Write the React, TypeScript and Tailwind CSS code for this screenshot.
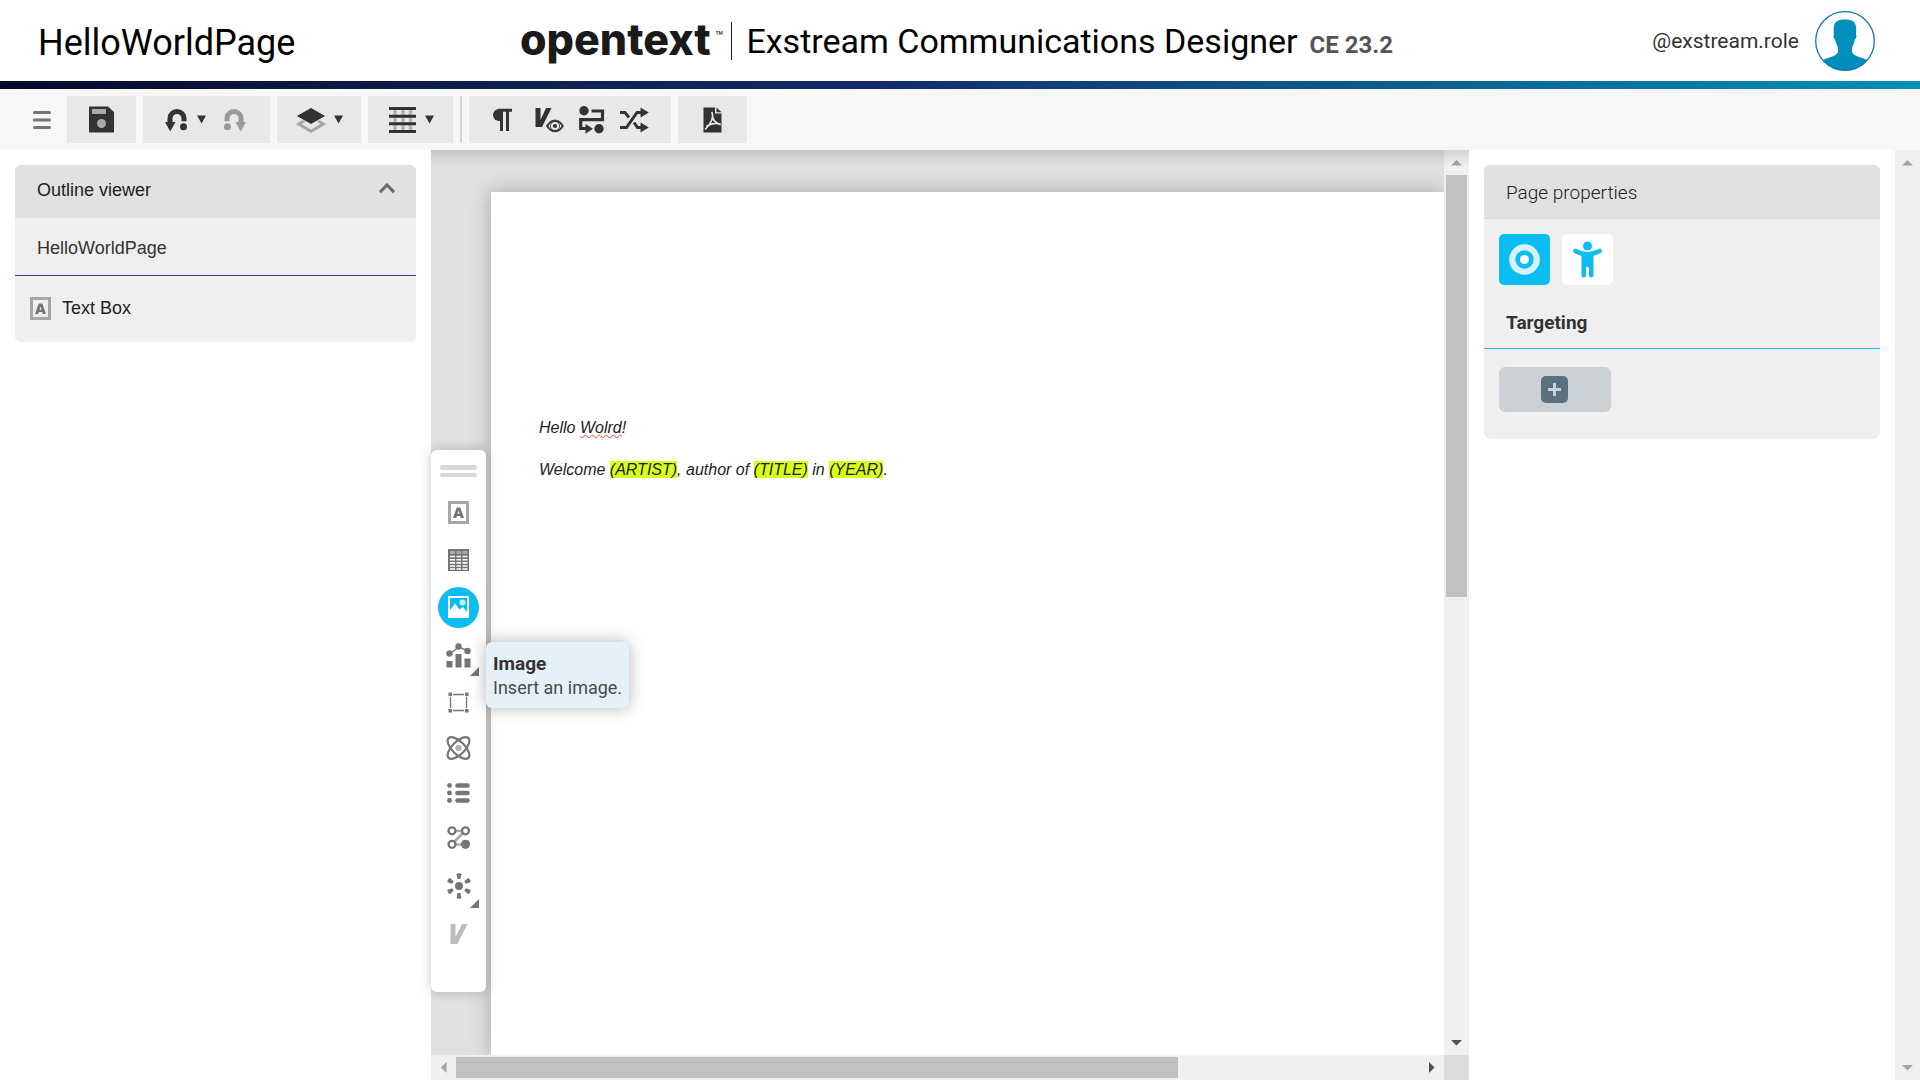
import React from "react";

type IconProps = {
  w: number;
  h: number;
  className?: string;
  children: React.ReactNode;
};

function Icon({ w, h, className = "", children }: IconProps) {
  return (
    <svg
      width={w}
      height={h}
      viewBox={`0 0 ${w} ${h}`}
      fill="none"
      aria-hidden="true"
      className={`shrink-0 ${className}`}
    >
      {children}
    </svg>
  );
}

const DARK = "#333333";
const GRAY = "#757575";

function Caret() {
  return (
    <Icon w={9} h={9}>
      <path d="M0 0.500H9L4.500 8.500Z" fill={DARK} />
    </Icon>
  );
}

function SaveIcon() {
  return (
    <Icon w={25} h={27}>
      <path d="M0 0.500H19L25 6V26.500H0Z" fill={DARK} />
      <rect x="3" y="3" width="14" height="5" fill="#aaa" />
      <circle cx="12.500" cy="17.500" r="4.500" fill="#aaa" />
    </Icon>
  );
}

function UndoIcon({ color = DARK, flip = false }: { color?: string; flip?: boolean }) {
  return (
    <Icon w={24} h={24} className={flip ? "-scale-x-100" : ""}>
      <path d="M6 15V10.500A7 7 0 0 1 20 10.500V13.300" stroke={color} strokeWidth="5" />
      <path d="M1 14H11.500L6.200 23.500Z" fill={color} />
      <circle cx="19.500" cy="18.700" r="3.500" fill={color} />
    </Icon>
  );
}

function LayersIcon() {
  return (
    <Icon w={30} h={26}>
      <path d="M15 9.500L27.300 17L15 24.200L2.700 17Z" stroke="#a6a6a6" strokeWidth="3" />
      <path d="M15 0.500L30 9L15 17.500L0 9Z" fill={DARK} stroke="#e8e8e8" strokeWidth="1" />
    </Icon>
  );
}

function GridIcon() {
  return (
    <Icon w={27} h={26}>
      <path d="M6 2V25M14 2V25M21.500 2V25" stroke="#b5b5b5" strokeWidth="3.500" />
      <path d="M0 1.500H27M0 9.200H27M0 16.800H27M0 24.500H27" stroke={DARK} strokeWidth="3" />
    </Icon>
  );
}

function PilcrowIcon() {
  return (
    <Icon w={20} h={24}>
      <path d="M7 1A6 6 0 0 0 7 13H8V1Z" fill={DARK} />
      <path d="M6 2.300H20M9.500 1V23M15.500 1V23" stroke={DARK} strokeWidth="3" />
    </Icon>
  );
}

function VariableEyeIcon() {
  return (
    <Icon w={29} h={26}>
      <path d="M0.500 1H5.500V13L11 1H16.500L7 20H0.500Z" fill={DARK} />
      <path
        d="M11.500 19C14 14.300 17 13.200 20 13.200S26 14.300 28.300 19C26 23.500 23 24.700 20 24.700S14 23.500 11.500 19Z"
        fill={DARK}
        stroke={DARK}
        strokeWidth="1"
      />
      <path d="M13.500 19C14.500 17 15.500 16 16.500 15.500A5 5 0 0 0 16.500 22.500C15.500 22 14.500 21 13.500 19ZM26.500 19C25.500 17 24.500 16 23.500 15.500A5 5 0 0 1 23.500 22.500C24.500 22 25.500 21 26.500 19Z" fill="#e8e8e8" />
      <circle cx="20" cy="19" r="3.100" stroke="#e8e8e8" strokeWidth="2" />
    </Icon>
  );
}

function FlowIcon() {
  return (
    <Icon w={26} h={28}>
      <circle cx="5" cy="4.800" r="4.700" fill={DARK} />
      <circle cx="20" cy="22.700" r="4.700" fill={DARK} />
      <path d="M12.500 5H23.500V13.700H1.700V22.500H8" stroke={DARK} strokeWidth="3.200" />
      <path d="M6.500 18L14 22.700L6.500 27.700Z" fill={DARK} />
    </Icon>
  );
}

function ShuffleIcon() {
  return (
    <Icon w={29} h={26}>
      <path
        d="M0 5.500H5L9 10.500M0 20.500H6.500L17 5.500H22M14 15.500L17.500 20.500H22"
        stroke={DARK}
        strokeWidth="3"
      />
      <path d="M20.500 0.500L28.800 5.500L20.500 10.500ZM20.500 15.500L28.800 20.500L20.500 25.500Z" fill={DARK} />
    </Icon>
  );
}

function PdfIcon() {
  return (
    <Icon w={19} h={26}>
      <path d="M0.500 0.500H12V6.500H18.500V25.500H0.500Z" fill={DARK} />
      <path d="M13.500 0.500L18.500 5.200H13.500Z" fill={DARK} />
      <path
        d="M9 5.500C10.500 9 9.500 15 2.500 22M9.500 10C10.500 13.500 13 16 17 17.500M4 19C8 16.500 12 15.500 17 17"
        stroke="#e8e8e8"
        strokeWidth="1.700"
        strokeLinecap="round"
      />
    </Icon>
  );
}

function TextBoxIcon() {
  return (
    <Icon w={21} h={23}>
      <rect x="1.500" y="1.500" width="18" height="20" stroke="#a6a6a6" strokeWidth="3" />
      <path
        d="M5 17L8.700 6.500H12.300L16 17H12.700L12.100 15H8.900L8.300 17ZM9.500 12.800H11.500L10.500 9.600Z"
        fill={GRAY}
        fillRule="evenodd"
      />
    </Icon>
  );
}

function TableIcon() {
  return (
    <Icon w={21} h={22}>
      <rect x="0" y="0" width="21" height="22" fill={GRAY} />
      <path d="M2 3.500H7M8.500 3.500H13M14.500 3.500H19.500" stroke="#aaa" strokeWidth="3" />
      <path
        d="M2 7.500H7M8.500 7.500H13M14.500 7.500H19.500M2 10.700H7M8.500 10.700H13M14.500 10.700H19.500M2 13.900H7M8.500 13.900H13M14.500 13.900H19.500M2 17H7M8.500 17H13M14.500 17H19.500M2 20H7M8.500 20H13M14.500 20H19.500"
        stroke="#fff"
        strokeWidth="1.600"
      />
    </Icon>
  );
}

function ImageIcon() {
  return (
    <Icon w={21} h={22}>
      <rect x="1" y="1" width="19" height="20" stroke="#fff" strokeWidth="2" />
      <circle cx="14.500" cy="6.500" r="3" fill="#c5edfb" />
      <path d="M1.500 15L7 7.500L11.500 13.500L15 11L19.500 16.500V21H1.500Z" fill="#fff" />
    </Icon>
  );
}

function ChartIcon() {
  return (
    <Icon w={26} h={25}>
      <path d="M4 10.500L13 4L22 8" stroke={GRAY} strokeWidth="1.500" />
      <circle cx="3.500" cy="10.500" r="3.200" fill={GRAY} />
      <circle cx="12.500" cy="3.500" r="3.200" fill={GRAY} />
      <circle cx="21.500" cy="8" r="3.200" fill={GRAY} />
      <path d="M0.500 18H6.500V24.500H0.500ZM9.500 11H15.500V24.500H9.500ZM18.500 15.500H24.500V24.500H18.500Z" fill={GRAY} />
    </Icon>
  );
}

function FrameIcon() {
  return (
    <Icon w={21} h={21}>
      <path d="M5 2.500H16M5 18.500H16M2.500 5V16M18.500 5V16" stroke={GRAY} strokeWidth="1.300" />
      <path d="M0.500 0.500H4V4H0.500ZM17 0.500H20.500V4H17ZM0.500 17H4V20.500H0.500ZM17 17H20.500V20.500H17Z" fill={GRAY} />
    </Icon>
  );
}

function AtomIcon() {
  return (
    <Icon w={25} h={24}>
      <g stroke={GRAY} strokeWidth="2.200">
        <ellipse cx="12.500" cy="12" rx="14" ry="6.300" transform="rotate(45 12.500 12)" />
        <ellipse cx="12.500" cy="12" rx="14" ry="6.300" transform="rotate(-45 12.500 12)" />
      </g>
      <circle cx="12.500" cy="12" r="3.200" fill="#b5b5b5" />
    </Icon>
  );
}

function ListIcon() {
  return (
    <Icon w={24} h={20}>
      <g fill={GRAY}>
        <circle cx="2.500" cy="2.500" r="2.400" />
        <circle cx="2.500" cy="10" r="2.400" />
        <circle cx="2.500" cy="17.500" r="2.400" />
      </g>
      <path d="M10.500 2.500H20.500M10.500 10H20.500M10.500 17.500H20.500" stroke={GRAY} strokeWidth="4.600" strokeLinecap="round" />
    </Icon>
  );
}

function NodesIcon() {
  return (
    <Icon w={24} h={23}>
      <path d="M5 5H18M5 18.500H18M5 18L18 5" stroke="#aaa" strokeWidth="2.700" />
      <g fill="#fff" stroke={GRAY} strokeWidth="2.300">
        <circle cx="5" cy="4.800" r="3.500" />
        <circle cx="18.500" cy="4.800" r="3.500" />
        <circle cx="5" cy="18.300" r="3.500" />
      </g>
      <circle cx="18.500" cy="18.300" r="4.600" fill={GRAY} />
    </Icon>
  );
}

function BurstIcon() {
  return (
    <Icon w={26} h={26}>
      <circle cx="13" cy="13" r="4" fill={GRAY} />
      {[0, 60, 120, 180, 240, 300].map((a) => (
        <path
          key={a}
          d="M10.600 1.200Q10.600 0.300 13 0.300T15.400 1.200L14.500 6H11.500Z"
          fill={GRAY}
          transform={`rotate(${a} 13 13)`}
        />
      ))}
    </Icon>
  );
}

function VariableIcon() {
  return (
    <Icon w={18} h={20}>
      <path d="M0.500 0H5.500V13L12 0H17.500L7.500 20H0.500Z" fill="#bdbdbd" />
    </Icon>
  );
}

function Corner() {
  return (
    <svg
      width="9"
      height="9"
      viewBox="0 0 9 9"
      aria-hidden="true"
      className="absolute right-[7px] bottom-[3px]"
    >
      <path d="M9 0V9H0Z" fill={GRAY} />
    </svg>
  );
}

function Group({ className, children }: { className: string; children: React.ReactNode }) {
  return <div className={`flex h-[47px] items-center bg-[#e8e8e8] ${className}`}>{children}</div>;
}

function Tool({
  label,
  className = "",
  children,
}: {
  label: string;
  className?: string;
  children: React.ReactNode;
}) {
  return (
    <button type="button" aria-label={label} className={`flex items-center ${className}`}>
      {children}
    </button>
  );
}

function PaletteButton({
  label,
  className,
  menu = false,
  children,
}: {
  label: string;
  className: string;
  menu?: boolean;
  children: React.ReactNode;
}) {
  return (
    <button
      type="button"
      aria-label={label}
      className={`relative flex w-full items-center justify-center ${className}`}
    >
      {children}
      {menu && <Corner />}
    </button>
  );
}

function Arrow({ dir, active }: { dir: "up" | "down" | "left" | "right"; active?: boolean }) {
  const paths = {
    up: "M0 8.500L5.500 3L11 8.500Z",
    down: "M0 3L5.500 8.500L11 3Z",
    left: "M8.500 0L3 5.500L8.500 11Z",
    right: "M3 0L8.500 5.500L3 11Z",
  };
  return (
    <span className="flex size-[25px] shrink-0 items-center justify-center">
      <Icon w={11} h={11}>
        <path d={paths[dir]} fill={active ? "#505050" : "#a3a3a3"} />
      </Icon>
    </span>
  );
}

function Field({ children }: { children: React.ReactNode }) {
  return <span className="bg-[#d7ff19]">{children}</span>;
}

function Header() {
  return (
    <header className="shrink-0">
      <div className="grid h-[81px] grid-cols-[1fr_auto_1fr] items-center pr-[45px] pl-[38px]">
        <h1 className="pt-1 text-[36px] leading-[44px] text-black">HelloWorldPage</h1>
        <div className="flex items-center">
          <span className="flex items-start pb-1 text-[#1a1a1a]">
            <span className="font-[Inter] text-[43px] leading-[40px] font-extrabold">opentext</span>
            <span className="pl-1 text-[14px] leading-[34px]">™</span>
          </span>
          <span className="ml-2 h-[38px] w-px bg-[#1a1a1a]" />
          <span className="ml-[14px] text-[34px] leading-[40px] text-black">
            Exstream Communications Designer
          </span>
          <span className="ml-3 pt-2 text-[24px] leading-8 font-bold text-[#555]">CE 23.2</span>
        </div>
        <div className="flex items-center justify-end gap-4">
          <span className="pt-0.5 text-[21px] text-[#333]">@exstream.role</span>
          <button type="button" aria-label="User profile">
            <Icon w={60} h={60}>
              <defs>
                <clipPath id="avatar">
                  <circle cx="30" cy="30" r="29.500" />
                </clipPath>
              </defs>
              <path
                clipPath="url(#avatar)"
                d="M0 60V52L8 49C14 46 22 45 23 41C23.500 38 22.500 35 21 32L20 28C18.500 28 18 24 19 24C18 14 19 8.500 30 8.500S42 14 41 24C42 24 41.500 28 40 28L39 32C37.500 35 36.500 38 37 41C38 45 46 46 52 49L60 52V60Z"
                fill="#008fbc"
              />
              <circle cx="30" cy="30" r="29.300" stroke="#0d79b0" strokeWidth="1.300" />
            </Icon>
          </button>
        </div>
      </div>
      <div className="h-2 bg-[linear-gradient(to_right,#080a2b_0%,#0f1f4e_26%,#122868_45%,#11407b_55%,#0b6394_76%,#0690b8_100%)]" />
    </header>
  );
}

function Toolbar() {
  return (
    <div className="flex h-[61px] shrink-0 items-center gap-[7px] bg-[#f7f7f7]">
      <button type="button" aria-label="Menu" className="flex h-[47px] w-[60px] items-center pl-[33px]">
        <Icon w={18} h={18}>
          <path d="M1.500 1.500H16.500M1.500 9H16.500M1.500 16.500H16.500" stroke={GRAY} strokeWidth="3" strokeLinecap="round" />
        </Icon>
      </button>
      <Group className="w-[69px] justify-center">
        <Tool label="Save">
          <SaveIcon />
        </Tool>
      </Group>
      <Group className="w-[127px] gap-[17px] pl-[21px]">
        <Tool label="Undo" className="gap-[9px]">
          <UndoIcon />
          <Caret />
        </Tool>
        <Tool label="Redo">
          <UndoIcon color="#999999" flip />
        </Tool>
      </Group>
      <Group className="w-[84px] pl-[19px]">
        <Tool label="Layers" className="gap-2">
          <LayersIcon />
          <Caret />
        </Tool>
      </Group>
      <Group className="w-[85px] pl-[21px]">
        <Tool label="Grid" className="gap-[9px]">
          <GridIcon />
          <Caret />
        </Tool>
      </Group>
      <span className="h-[47px] w-0.5 bg-[#d4d4d4]" />
      <Group className="w-[202px] gap-[15px] pl-[23px]">
        <Tool label="Show formatting" className="mr-2">
          <PilcrowIcon />
        </Tool>
        <Tool label="View variables">
          <VariableEyeIcon />
        </Tool>
        <Tool label="Flow">
          <FlowIcon />
        </Tool>
        <Tool label="Shuffle">
          <ShuffleIcon />
        </Tool>
      </Group>
      <Group className="w-[69px] justify-center">
        <Tool label="Preview PDF">
          <PdfIcon />
        </Tool>
      </Group>
    </div>
  );
}

function OutlinePanel() {
  return (
    <aside className="w-[431px] shrink-0 p-[15px] font-['Liberation_Sans',sans-serif] text-[18px] text-[#222]">
      <section className="overflow-hidden rounded-md bg-[#efefef]">
        <button type="button" className="flex h-[53px] w-full items-center justify-between bg-[#e1e1e1] pr-[21px] pb-0.5 pl-[22px]">
          Outline viewer
          <Icon w={16} h={16}>
            <path d="M1 9.200L8 2L15 9.200" stroke="#6b6b6b" strokeWidth="3" />
          </Icon>
        </button>
        <div className="flex h-[58px] items-center border-b border-[#2e3d98] px-[22px] pt-1 text-[#333]">
          HelloWorldPage
        </div>
        <div className="flex h-[66px] items-center gap-[11px] px-[15px] pb-0.5">
          <TextBoxIcon />
          Text Box
        </div>
      </section>
    </aside>
  );
}

function Palette() {
  return (
    <div
      role="toolbar"
      aria-label="Insert"
      className="absolute top-[300px] left-0 z-20 h-[542px] w-[55px] rounded-md bg-white pt-[15px] shadow-[0_0_12px_rgba(0,0,0,0.22)]"
    >
      <div className="mb-3 flex flex-col items-center gap-[3px]">
        <span className="h-[5px] w-[37px] rounded-full bg-[#d8d8d8]" />
        <span className="h-1 w-[37px] rounded-full bg-[#d8d8d8]" />
      </div>
      <PaletteButton label="Text box" className="h-[47px]">
        <TextBoxIcon />
      </PaletteButton>
      <PaletteButton label="Table" className="h-[47px]">
        <TableIcon />
      </PaletteButton>
      <PaletteButton label="Image" className="h-12">
        <span className="flex size-[41px] items-center justify-center rounded-full bg-[#0bbdf0]">
          <ImageIcon />
        </span>
      </PaletteButton>
      <PaletteButton label="Chart" className="h-12" menu>
        <ChartIcon />
      </PaletteButton>
      <PaletteButton label="Frame" className="h-[47px]">
        <FrameIcon />
      </PaletteButton>
      <PaletteButton label="Dynamic object" className="h-11">
        <AtomIcon />
      </PaletteButton>
      <PaletteButton label="List" className="h-[45px]">
        <ListIcon />
      </PaletteButton>
      <PaletteButton label="Rules" className="h-[45px]">
        <NodesIcon />
      </PaletteButton>
      <PaletteButton label="Interactive" className="h-[51px]" menu>
        <BurstIcon />
      </PaletteButton>
      <PaletteButton label="Variable" className="h-[45px]">
        <VariableIcon />
      </PaletteButton>
      <div
        role="tooltip"
        className="absolute top-[192px] left-[55px] rounded-md bg-[#e5f1f8] px-[7px] pt-[10px] pb-2 text-[18px] leading-6 whitespace-nowrap text-[#4a4a4a] shadow-[0_0_16px_rgba(0,0,0,0.3)]"
      >
        <strong className="block text-[19px] font-bold text-[#333]">Image</strong>
        Insert an image.
      </div>
    </div>
  );
}

function Canvas() {
  return (
    <main className="relative flex min-w-0 flex-1 flex-col">
      <div className="flex min-h-0 flex-1">
        <div className="flex min-w-0 flex-1 overflow-hidden bg-[#e0e0e0] pt-[42px] pl-[60px]">
          <article className="flex-1 bg-white px-12 pt-[227px] font-['Liberation_Sans',sans-serif] text-[16px] leading-[18px] text-[#222] italic shadow-[0_0_20px_rgba(0,0,0,0.26)]">
            <p>
              Hello{" "}
              <span className="underline decoration-[#ff3b3b] decoration-wavy decoration-1 underline-offset-1 [text-decoration-skip-ink:none]">
                Wolrd
              </span>
              !
            </p>
            <p className="mt-6">
              Welcome <Field>(ARTIST)</Field>, author of <Field>(TITLE)</Field> in <Field>(YEAR)</Field>.
            </p>
          </article>
        </div>
        <div className="flex w-[25px] flex-col items-center bg-[#f0f0f0]">
          <Arrow dir="up" />
          <div className="flex w-full flex-1 flex-col px-0.5">
            <div className="h-[422px] bg-[#c1c1c1]" />
          </div>
          <Arrow dir="down" active />
        </div>
      </div>
      <div className="flex h-[25px] shrink-0">
        <div className="flex flex-1 bg-[#f0f0f0]">
          <Arrow dir="left" />
          <div className="flex flex-1 py-0.5">
            <div className="w-3/4 bg-[#c1c1c1]" />
          </div>
          <Arrow dir="right" active />
        </div>
        <div className="w-[25px] bg-[#dcdcdc]" />
      </div>
      <div className="pointer-events-none absolute inset-x-0 top-0 z-10 h-4 bg-linear-to-b from-black/12 to-transparent" />
      <Palette />
    </main>
  );
}

function PropertiesPanel() {
  return (
    <aside className="w-[426px] shrink-0 p-[15px] text-[19px] text-[#222]">
      <section className="overflow-hidden rounded-md bg-[#efefef]">
        <h2 className="flex h-[54px] items-center border-b border-[#d8d8d8] bg-[#e1e1e1] px-[22px] pt-1 font-light">
          Page properties
        </h2>
        <div className="flex gap-3 px-[15px] pt-[15px]">
          <button
            type="button"
            aria-label="Targeting"
            className="flex size-[51px] items-center justify-center rounded-[5px] bg-[#0bbdf0]"
          >
            <Icon w={31} h={31}>
              <circle cx="15.500" cy="15.500" r="15.300" fill="#d6f3fd" />
              <circle cx="15.500" cy="15.500" r="9.200" fill="#0bbdf0" />
              <circle cx="15.500" cy="15.500" r="4.500" fill="#fff" />
            </Icon>
          </button>
          <button
            type="button"
            aria-label="Accessibility"
            className="flex size-[51px] items-center justify-center rounded-[5px] bg-white"
          >
            <Icon w={29} h={37}>
              <circle cx="14.500" cy="5" r="4.500" fill="#0bbdf0" />
              <path
                d="M2.500 10C7 12.500 11 13.300 14.500 13.300S22 12.500 26.500 10"
                stroke="#0bbdf0"
                strokeWidth="4.600"
                strokeLinecap="round"
              />
              <path
                d="M8.500 12H20.500V34.500Q20.500 36.500 18.300 36.500T16 34.500V26H13V34.500Q13 36.500 10.700 36.500T8.500 34.500Z"
                fill="#0bbdf0"
              />
            </Icon>
          </button>
        </div>
        <h3 className="flex h-[64px] items-center border-b border-[#0bbdf0] px-[22px] pt-[13px] font-bold text-[#333]">
          Targeting
        </h3>
        <div className="px-[15px] pt-[18px] pb-[27px]">
          <button
            type="button"
            aria-label="Add targeting rule"
            className="flex h-[45px] w-[112px] items-center justify-center rounded-md bg-[#cbd0d4] pr-0.5"
          >
            <span className="flex size-[27px] items-center justify-center rounded-[5px] bg-[#5a707f]">
              <Icon w={13} h={13}>
                <path d="M6.500 0V13M0 6.500H13" stroke="#cbd0d4" strokeWidth="3" />
              </Icon>
            </span>
          </button>
        </div>
      </section>
    </aside>
  );
}

export default function App() {
  return (
    <div className="flex h-screen flex-col overflow-hidden bg-white font-[Roboto,sans-serif]">
      <Header />
      <Toolbar />
      <div className="flex min-h-0 flex-1">
        <OutlinePanel />
        <Canvas />
        <PropertiesPanel />
        <div className="flex w-[25px] shrink-0 flex-col items-center justify-between bg-[#f0f0f0]">
          <Arrow dir="up" />
          <Arrow dir="down" />
        </div>
      </div>
    </div>
  );
}
